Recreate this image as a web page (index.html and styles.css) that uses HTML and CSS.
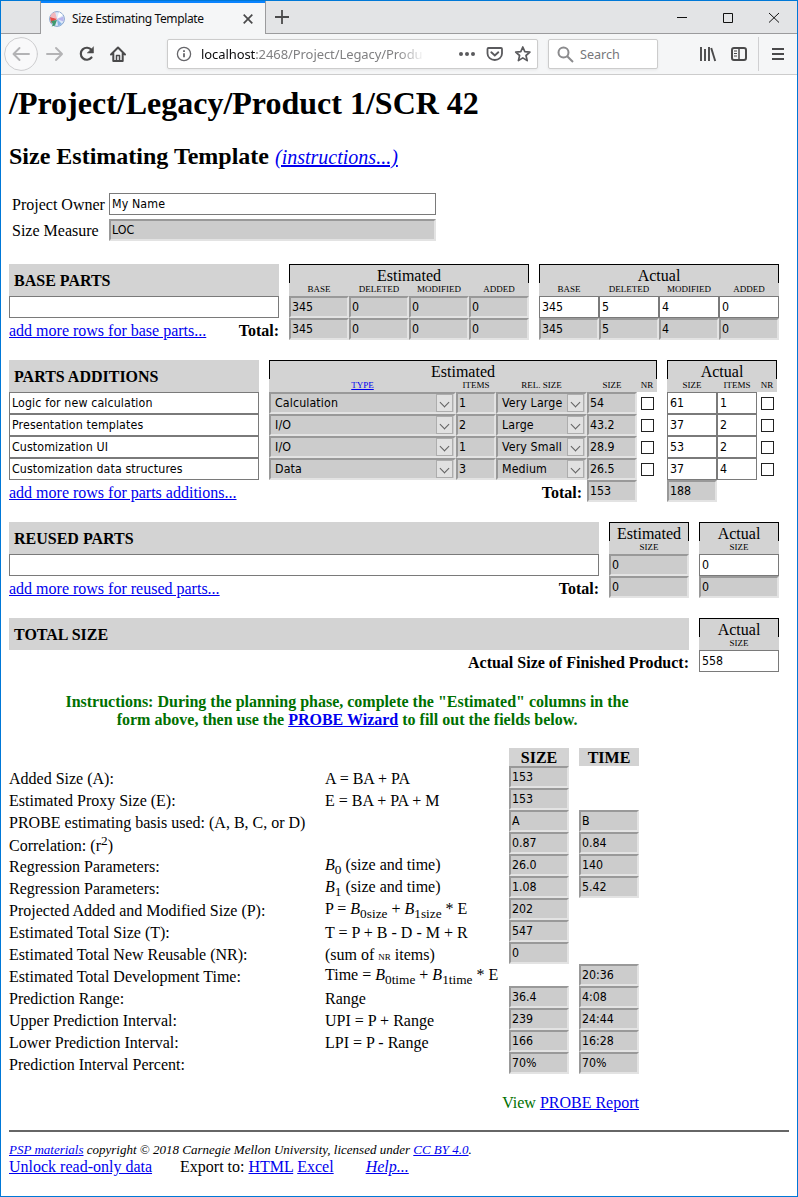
FILE: index.html
```html
<!DOCTYPE html>
<html lang="en">
<head>
<meta charset="utf-8">
<title>Size Estimating Template</title>
<link rel="stylesheet" href="styles.css">
</head>
<body>
<div class="window">
  <div class="tabbar">
    <div class="tab-lead"></div>
    <div class="tab">
      <svg class="favicon" width="16" height="16" viewBox="0 0 16 16"><circle cx="8" cy="8" r="7.4" fill="#dce8f8" stroke="#7a9cc8" stroke-width=".9"/><path d="M8 8 1 5.5A7.4 7.4 0 0 1 6 1Z" fill="#f2b8bc"/><path d="M8 8 2 12 1 6Z" fill="#e84a45"/><path d="M8 8 10 1l4 3Z" fill="#fff"/><path d="M8 8l6.500-2.500v5Z" fill="#b8b5ee"/><path d="M8 8l5 5-4 2Z" fill="#86b4e6"/><path d="M2 10 8 9 6 14.500 2.500 15.500l1.500-2Z" fill="#3f9a70"/></svg>
      <span class="tab-title">Size Estimating Template</span>
      <svg class="tab-close" width="10" height="10" viewBox="0 0 10 10"><path d="M.7.7 9.300 9.300M9.300.7.7 9.300" stroke="#4a4a4b" stroke-width="1.700" fill="none"/></svg>
    </div>
    <div class="tab-rest">
      <svg class="plus" width="14" height="14" viewBox="0 0 14 14"><path d="M7 0v14M0 7h14" stroke="#4a4a4b" stroke-width="1.800"/></svg>
      <svg class="caption" width="102" height="12" viewBox="0 0 102 12"><path d="M0 6.500h10M46.500 2.500h9v9h-9zM92 2l10 9.500M102 2 92 11.500" stroke="#111" fill="none"/></svg>
    </div>
  </div>
  <div class="toolbar">
    <svg class="nav" width="166" height="40" viewBox="0 0 166 40" fill="none" stroke-linecap="round" stroke-linejoin="round">
      <circle cx="20" cy="20" r="16.400" fill="#f9f9fa" stroke="#cdcdcf"/>
      <path d="M28 20H13M18.500 14l-6 6 6 6" stroke="#b3b3b5" stroke-width="1.900"/>
      <path d="M46 20h14M55 14l6 6-6 6" stroke="#b3b3b5" stroke-width="1.900"/>
      <path d="M90.500 16A6 6 0 1 0 90.500 23.500" stroke="#4a4a4b" stroke-width="2.200"/>
      <path d="M92.500 13v6h-6z" fill="#4a4a4b" stroke="#4a4a4b" stroke-width=".5"/>
      <path d="M110 20.500 117 13.500 124 20.500M112.300 19.500v7.500h9.400v-7.500" stroke="#4a4a4b" stroke-width="2"/>
      <path d="M115.500 27v-5.500h3V27" stroke="#4a4a4b" stroke-width="1.500"/>
    </svg>
    <div class="urlbar">
      <svg width="16" height="16" viewBox="0 0 16 16" fill="none"><circle cx="8" cy="8" r="6.600" stroke="#66666a" stroke-width="1.300"/><path d="M8 7.200v4M8 4.300v1.600" stroke="#66666a" stroke-width="1.800"/></svg>
      <div class="url"><b>localhost</b>:2468/Project/Legacy/Produ</div>
      <svg class="url-icons" width="74" height="18" viewBox="0 0 74 18" fill="none">
        <g fill="#5a5a5d"><circle cx="3" cy="9" r="2"/><circle cx="9" cy="9" r="2"/><circle cx="15" cy="9" r="2"/></g>
        <path d="M30.500 3h12.500q1 0 1 1v4.500a7.250 6.500 0 0 1-14.500 0V4q0-1 1-1Z" stroke="#5a5a5d" stroke-width="1.800"/><path d="M33.300 7.300l3.500 3.200 3.500-3.200" stroke="#5a5a5d" stroke-width="1.900" stroke-linecap="round"/>
        <path d="M64.800 2l2 4.600 5.100.5-3.900 3.400 1.200 5.100-4.400-2.700-4.400 2.700 1.200-5.100-3.900-3.400 5.100-.5Z" stroke="#5a5a5d" stroke-width="1.700" stroke-linejoin="round"/>
      </svg>
    </div>
    <div class="search">
      <svg width="17" height="17" viewBox="0 0 17 17" fill="none" stroke="#8b8b8d" stroke-width="2"><circle cx="6.500" cy="6.500" r="5"/><path d="M10.200 10.200 16 16"/></svg>
      <span>Search</span>
    </div>
    <svg class="tools" width="88" height="34" viewBox="0 0 88 34" fill="none" stroke="#4a4a4b">
      <path d="M2 10v14M6 12v12M10 10v14" stroke-width="1.900"/><path d="M12.200 11l4 13" stroke-width="1.900"/>
      <rect x="33" y="11" width="14" height="12" rx="2" stroke-width="2"/><path d="M40 11v12" stroke-width="1.500"/><path d="M35 14h3M35 16.500h3M35 19h3" stroke-width="1"/>
      <path d="M59.500 0v34" stroke="#d0d0d2"/>
      <path d="M73 12h12M73 17h12M73 22h12" stroke-width="2"/>
    </svg>
  </div>

  <div class="page">
    <h1>/Project/Legacy/Product 1/SCR 42</h1>
    <h2>Size Estimating Template <a class="instr">(instructions...)</a></h2>

    <div class="owner">
      <span>Project Owner</span><div class="in wide">My Name</div>
      <span>Size Measure</span><div class="ro">LOC</div>
    </div>

    <div class="section base">
      <div class="col">
        <div class="title">BASE PARTS</div>
        <div class="in"></div>
        <div class="foot"><a>add more rows for base parts...</a><b>Total:</b></div>
      </div>
      <div class="col">
        <div class="head"><div class="cap">Estimated</div><div class="names four"><span>BASE</span><span>DELETED</span><span>MODIFIED</span><span>ADDED</span></div></div>
        <div class="four"><div class="ro">345</div><div class="ro">0</div><div class="ro">0</div><div class="ro">0</div><div class="ro">345</div><div class="ro">0</div><div class="ro">0</div><div class="ro">0</div></div>
      </div>
      <div class="col">
        <div class="head"><div class="cap">Actual</div><div class="names four"><span>BASE</span><span>DELETED</span><span>MODIFIED</span><span>ADDED</span></div></div>
        <div class="four"><div class="in">345</div><div class="in">5</div><div class="in">4</div><div class="in">0</div><div class="ro">345</div><div class="ro">5</div><div class="ro">4</div><div class="ro">0</div></div>
      </div>
    </div>

    <div class="section parts">
      <div class="col">
        <div class="title">PARTS ADDITIONS</div>
        <div class="in wide">Logic for new calculation</div>
        <div class="in wide">Presentation templates</div>
        <div class="in wide">Customization UI</div>
        <div class="in wide">Customization data structures</div>
        <div class="foot"><a>add more rows for parts additions...</a></div>
      </div>
      <div class="col">
        <div class="head"><div class="cap">Estimated</div><div class="names est"><span><a>TYPE</a></span><span>ITEMS</span><span>REL. SIZE</span><span>SIZE</span><span>NR</span></div></div>
        <div class="est">
          <div class="ro sel">Calculation<i class="arrow"></i></div><div class="ro">1</div><div class="ro sel">Very Large<i class="arrow"></i></div><div class="ro">54</div><div class="check"></div>
          <div class="ro sel">I/O<i class="arrow"></i></div><div class="ro">2</div><div class="ro sel">Large<i class="arrow"></i></div><div class="ro">43.2</div><div class="check"></div>
          <div class="ro sel">I/O<i class="arrow"></i></div><div class="ro">1</div><div class="ro sel">Very Small<i class="arrow"></i></div><div class="ro">28.9</div><div class="check"></div>
          <div class="ro sel">Data<i class="arrow"></i></div><div class="ro">3</div><div class="ro sel">Medium<i class="arrow"></i></div><div class="ro">26.5</div><div class="check"></div>
          <div class="total"><b>Total:</b></div><div class="ro">153</div>
        </div>
      </div>
      <div class="col">
        <div class="head"><div class="cap">Actual</div><div class="names act"><span>SIZE</span><span>ITEMS</span><span>NR</span></div></div>
        <div class="act">
          <div class="in">61</div><div class="in">1</div><div class="check"></div>
          <div class="in">37</div><div class="in">2</div><div class="check"></div>
          <div class="in">53</div><div class="in">2</div><div class="check"></div>
          <div class="in">37</div><div class="in">4</div><div class="check"></div>
          <div class="ro">188</div>
        </div>
      </div>
    </div>

    <div class="section reused">
      <div class="col">
        <div class="title">REUSED PARTS</div>
        <div class="in"></div>
        <div class="foot"><a>add more rows for reused parts...</a><b>Total:</b></div>
      </div>
      <div class="col">
        <div class="head"><div class="cap">Estimated</div><div class="names"><span>SIZE</span></div></div>
        <div class="ro">0</div><div class="ro">0</div>
      </div>
      <div class="col">
        <div class="head"><div class="cap">Actual</div><div class="names"><span>SIZE</span></div></div>
        <div class="in">0</div><div class="ro">0</div>
      </div>
    </div>

    <div class="section size">
      <div class="col">
        <div class="title">TOTAL SIZE</div>
        <div class="foot end"><b>Actual Size of Finished Product:</b></div>
      </div>
      <div class="col">
        <div class="head"><div class="cap">Actual</div><div class="names"><span>SIZE</span></div></div>
        <div class="in">558</div>
      </div>
    </div>

    <p class="guide">Instructions: During the planning phase, complete the "Estimated" columns in the<br>form above, then use the <a>PROBE Wizard</a> to fill out the fields below.</p>

    <div class="probe">
      <span class="hd s">SIZE</span><span class="hd t">TIME</span>
      <span class="l">Added Size (A):</span><span class="m">A = BA + PA</span><div class="ro s">153</div>
      <span class="l">Estimated Proxy Size (E):</span><span class="m">E = BA + PA + M</span><div class="ro s">153</div>
      <span class="l">PROBE estimating basis used: (A, B, C, or D)</span><div class="ro s">A</div><div class="ro t">B</div>
      <span class="l low">Correlation: (r<sup>2</sup>)</span><div class="ro s">0.87</div><div class="ro t">0.84</div>
      <span class="l">Regression Parameters:</span><span class="m up"><i>B</i><sub>0</sub> (size and time)</span><div class="ro s">26.0</div><div class="ro t">140</div>
      <span class="l">Regression Parameters:</span><span class="m up"><i>B</i><sub>1</sub> (size and time)</span><div class="ro s">1.08</div><div class="ro t">5.42</div>
      <span class="l">Projected Added and Modified Size (P):</span><span class="m up">P = <i>B</i><sub>0size</sub> + <i>B</i><sub>1size</sub> * E</span><div class="ro s">202</div>
      <span class="l">Estimated Total Size (T):</span><span class="m">T = P + B - D - M + R</span><div class="ro s">547</div>
      <span class="l">Estimated Total New Reusable (NR):</span><span class="m">(sum of <small>NR</small> items)</span><div class="ro s">0</div>
      <span class="l">Estimated Total Development Time:</span><span class="m up">Time = <i>B</i><sub>0time</sub> + <i>B</i><sub>1time</sub> * E</span><div class="ro t">20:36</div>
      <span class="l">Prediction Range:</span><span class="m">Range</span><div class="ro s">36.4</div><div class="ro t">4:08</div>
      <span class="l">Upper Prediction Interval:</span><span class="m">UPI = P + Range</span><div class="ro s">239</div><div class="ro t">24:44</div>
      <span class="l">Lower Prediction Interval:</span><span class="m">LPI = P - Range</span><div class="ro s">166</div><div class="ro t">16:28</div>
      <span class="l">Prediction Interval Percent:</span><div class="ro s">70%</div><div class="ro t">70%</div>
    </div>
    <p class="report">View <a>PROBE Report</a></p>

    <div class="rule"></div>
    <p class="legal"><a>PSP materials</a> copyright © 2018 Carnegie Mellon University, licensed under <a>CC BY 4.0</a>.</p>
    <p class="links"><a>Unlock read-only data</a><span>Export to: <a>HTML</a> <a>Excel</a></span><a class="help">Help...</a></p>
  </div>
</div>
</body>
</html>
```
FILE: styles.css
```css
* { box-sizing: border-box; }
body { margin: 0; background: #fff; }
.window { width: 798px; height: 1197px; border: 1px solid #0078d7; overflow: hidden; background: #fff; color: #000; font: 16px/18px "Liberation Serif", serif; }
svg { display: block; flex: none; }

/* browser chrome */
.tabbar { display: flex; height: 33px; background: #e3e4e6; font: 12px "Noto Sans", sans-serif; color: #0c0c0d; }
.tab-lead { width: 39px; border-bottom: 1px solid #9b9b9d; }
.tab { display: flex; align-items: center; width: 226px; padding: 2px 12px 0 8px; background: #f5f6f7; border: solid #9b9b9d; border-width: 0 1px; box-shadow: inset 0 2px #0a84ff; }
.tab-title { margin-left: 7px; flex: 1; font-size: 12px; letter-spacing: -.37px; white-space: nowrap; }
.tab-rest { flex: 1; display: flex; justify-content: space-between; align-items: center; padding: 0 18px 0 9px; border-bottom: 1px solid #9b9b9d; }
.toolbar { display: flex; height: 41px; background: #f5f6f7; border-bottom: 1px solid #ccc; font: 14px "Noto Sans", sans-serif; }
.urlbar, .search { display: flex; align-items: center; height: 30px; margin-top: 5px; background: #fff; border: 1px solid #ccc; border-radius: 2px; box-shadow: 0 1px 3px #0001; }
.urlbar { width: 371px; padding-left: 8px; }
.url { width: 224px; margin-left: 9px; white-space: nowrap; color: #808082; font-size: 13px; letter-spacing: -.08px; mask-image: linear-gradient(to right, #000 196px, transparent 224px); }
.url b { font-weight: 400; color: #0c0c0d; }
.url-icons { margin-left: 33px; }
.search { width: 110px; margin-left: 10px; padding-left: 8px; color: #76767a; font-size: 12.6px; }
.search span { margin-left: 6px; }
.tools { margin: 3px 0 0 41px; }

/* document */
.page { padding: 0 8px; }
a { color: #0000ee; text-decoration: underline; }
h1 { margin: 10px 0 0; font-size: 32px; line-height: 37px; }
h2 { margin: 20px 0 0; font-size: 24px; line-height: 28px; }
.instr { font-size: 20px; font-weight: 400; font-style: italic; }
.owner { display: grid; grid-template-columns: 97px 327px; grid-auto-rows: 22px; row-gap: 4px; margin-top: 22px; padding-left: 3px; line-height: 24px; }
.in, .ro { height: 22px; font: 12.3px/18px "DejaVu Sans Condensed", "DejaVu Sans", sans-serif; font-stretch: condensed; white-space: nowrap; }
.in { border: 1px solid #7a7a7a; background: #fff; padding: 1px 2px; }
.ro { border: 2px solid; border-color: #999 #e3e3e3 #e3e3e3 #999; background: #ccc; padding: 0 1px; }
.wide, .sel { letter-spacing: .12px; }
.section { display: grid; column-gap: 10px; }
.base { grid-template-columns: 270px 240px 240px; margin-top: 23px; }
.parts { grid-template-columns: 250px 388px 110px; margin-top: 20px; }
.reused { grid-template-columns: 590px 80px 80px; margin-top: 20px; }
.size { grid-template-columns: 680px 80px; margin-top: 20px; }
.title { height: 32px; padding-left: 5px; background: #d3d3d3; font-weight: 700; line-height: 34px; }
.head { height: 32px; background: #d3d3d3; text-align: center; }
.cap { height: 19px; border: solid #000; border-width: 1px 1px 0; line-height: 21px; }
.names { height: 13px; font-size: 9px; line-height: 12px; }
.four { display: grid; grid-template-columns: repeat(4, 60px); }
.est { display: grid; grid-template-columns: 187px 40px 91px 50px 20px; }
.act { display: grid; grid-template-columns: 50px 40px 20px; }
.foot { display: flex; justify-content: space-between; height: 22px; line-height: 25px; }
.end { justify-content: flex-end; }
.total { grid-column: 1 / 4; height: 22px; padding-right: 5px; text-align: right; line-height: 25px; }
.sel { display: flex; justify-content: space-between; padding: 0 1px 0 4px; }
.arrow { display: flex; justify-content: center; width: 17px; height: 18px; border: 1px solid #adadad; background: #e1e1e1; }
.arrow::before { content: ""; width: 6px; height: 6px; margin-top: 4px; border: solid #606060; border-width: 0 1px 1px 0; transform: rotate(45deg); }
.check { width: 13px; height: 13px; margin: 5px 0 0 4px; border: 1px solid #222; background: #fff; }

.guide { margin: 21px 0 0; width: 676px; text-align: center; font-weight: 700; color: #007000; }
.probe { display: grid; grid-template-columns: 316px 184px 60px 60px; grid-template-rows: 18px repeat(14, 22px); margin-top: 19px; white-space: nowrap; line-height: 26px; }
.probe .l { grid-column: 1; height: 22px; }
.probe .m { grid-column: 2; height: 22px; }
.probe .s { grid-column: 3; }
.probe .t { grid-column: 4; margin-left: 10px; margin-right: -10px; }
.probe .hd { height: 18px; background: #d3d3d3; font-weight: 700; text-align: center; line-height: 20px; }
.probe sub, .probe sup { font-size: 13.3px; line-height: 0; }
.probe .low { line-height: 28px; }
.probe .up { line-height: 21px; }
.probe small { font-size: 9px; }
.report { width: 630px; margin: 20px 0 0; text-align: right; color: #007000; }
.rule { width: 780px; height: 2px; margin-top: 18px; background: #666; }
.legal { margin: 9px 0 0; font-size: 13px; line-height: 17px; font-style: italic; }
.links { display: flex; margin: 0; }
.links span { margin-left: 28px; }
.links .help { margin-left: 32px; font-style: italic; }
```
